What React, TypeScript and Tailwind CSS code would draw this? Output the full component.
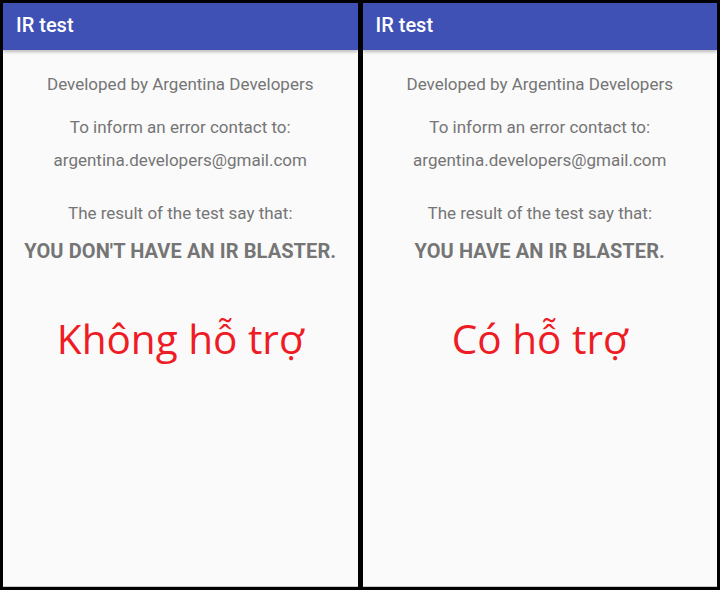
import React from "react";

type Result = {
  verdict: string;
  label: string;
};

const results: Result[] = [
  { verdict: "YOU DON'T HAVE AN IR BLASTER.", label: "Không hỗ trợ" },
  { verdict: "YOU HAVE AN IR BLASTER.", label: "Có hỗ trợ" },
];

function Screen({ verdict, label }: Result) {
  return (
    <div className="flex-1 flex flex-col bg-[#fafafa] border-b border-[#c8c8c8]">
      <div className="h-[47px] bg-[#3f51b5] flex items-start px-[13px] pt-[10px] shadow-[0_2px_3px_rgba(0,0,0,0.25)] relative z-10">
        <span className="text-white text-[20px] font-medium leading-[24px]">
          IR test
        </span>
      </div>
      <div className="flex flex-col items-center text-[#757575] text-[17px] leading-[24px]">
        <p className="mt-[22px]">Developed by Argentina Developers</p>
        <p className="mt-[19px]">To inform an error contact to:</p>
        <p className="mt-[9px]">argentina.developers@gmail.com</p>
        <p className="mt-[29px]">The result of the test say that:</p>
        <p className="mt-[13px] text-[20px] leading-[26px] font-bold tracking-[0.1px]">
          {verdict}
        </p>
        <p className="mt-[50px] text-[40.5px] leading-[50px] text-[#ee1c25] font-['Open_Sans','Noto_Sans',sans-serif]">
          {label}
        </p>
      </div>
    </div>
  );
}

export default function App() {
  return (
    <div className="w-[720px] h-[590px] bg-black flex gap-[5px] p-[3px] font-['Roboto','Liberation_Sans',sans-serif]">
      {results.map((r) => (
        <Screen key={r.label} {...r} />
      ))}
    </div>
  );
}
